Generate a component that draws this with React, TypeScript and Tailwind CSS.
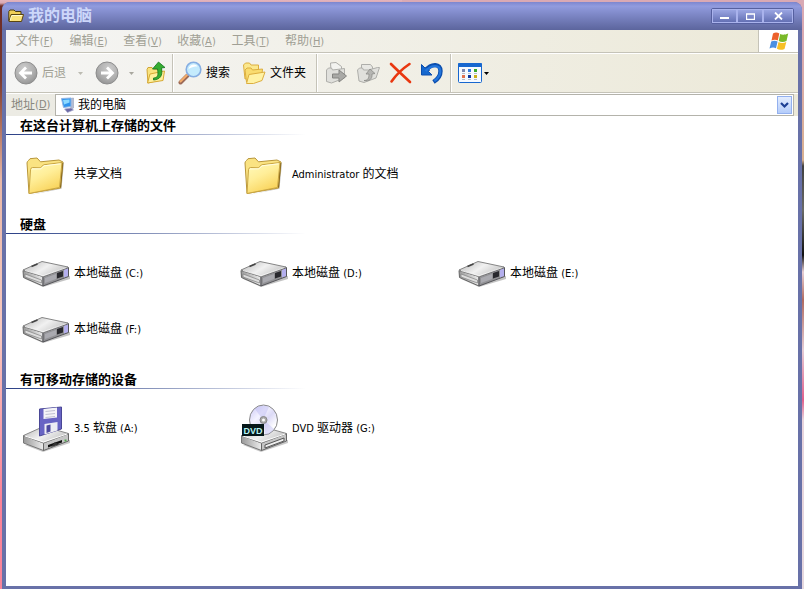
import React from "react";

const uiFont = "font-['Tahoma','DejaVu_Sans_Condensed','Noto_Sans_CJK_SC',sans-serif]";

function SmallFolder() {
  return (
    <svg width="16" height="16" viewBox="0 0 16 16" aria-hidden="true">
      <path d="M.8 13V3.500L2 2h4l1.500 1.500H13V6" fill="#f0cf58" stroke="#4b3c10" />
      <path d="m1 13.500 2-7h12.500l-2 7z" fill="#fbe37c" stroke="#5a4511" strokeLinejoin="round" />
      <path d="m3.800 7.500h10.500M3.500 8l-1.300 4.500" stroke="#fffbd2" />
    </svg>
  );
}

function RoundArrow({ flip = false }: { flip?: boolean }) {
  return (
    <svg width="24" height="24" viewBox="0 0 24 24" aria-hidden="true" className={flip ? "-scale-x-100" : ""}>
      <defs>
        <radialGradient id="disc" cx=".4" cy=".3" r=".75">
          <stop offset="0" stopColor="#cdcdcd" />
          <stop offset=".65" stopColor="#adadad" />
          <stop offset="1" stopColor="#929292" />
        </radialGradient>
      </defs>
      <circle cx="12" cy="12" r="11" fill="url(#disc)" stroke="#8d8d8d" />
      <path d="M18 12H7M12 6.500 6.500 12l5.500 5.500" fill="none" stroke="#fff" strokeWidth="2.800" />
    </svg>
  );
}

function UpFolder() {
  return (
    <svg width="24" height="24" viewBox="0 0 24 24" aria-hidden="true">
      <path d="M3 8.500 4 6.500h4l1.500 1.500 8 .5v10L4 22z" fill="#f9e37d" stroke="#d0a536" />
      <path d="M3.500 22 6 13l14.500-3L19 19.500z" fill="#fff09b" stroke="#d6a935" strokeLinejoin="round" />
      <path d="M9.500 17c4.500 0 5-3 4-9H8.500L14.500 1l6.500 5.500-3.500.500c1.500 8-1.500 11.500-8 12z" fill="#36ad31" stroke="#137520" strokeWidth=".8" />
    </svg>
  );
}

function Magnifier() {
  return (
    <svg width="24" height="24" viewBox="0 0 24 24" aria-hidden="true">
      <path d="m9.500 14.500-7 7" stroke="#9b6a58" strokeWidth="4" strokeLinecap="round" />
      <path d="m9 14-6.500 6.500" stroke="#f5ad6b" strokeWidth="2" strokeLinecap="round" />
      <circle cx="15.500" cy="8.500" r="7.300" fill="#c4ebfd" stroke="#86aee2" strokeWidth="1.600" />
      <path d="M10.500 8c.5-2.500 2.500-4.500 5.500-4.500 2 0 3 1 3.500 2-3 0-5.500.5-9 2.500z" fill="#fff" />
    </svg>
  );
}

function OpenFolders() {
  return (
    <svg width="24" height="24" viewBox="0 0 24 24" aria-hidden="true">
      <g stroke="#dcae3f" strokeLinejoin="round">
        <path d="m3 18-1.500-14 2-2h4l1.500 2h7.500v11z" fill="#fbe88e" />
        <path d="m4.500 21-1.500-12 2-2h4l1.500 2 10-1-1 10z" fill="#f9dc70" />
        <path d="m4.500 22.500 2.500-9 16-2.500-3 8.500-8.500 3z" fill="#fff2a4" />
      </g>
    </svg>
  );
}

function MoveIcon({ copy = false }: { copy?: boolean }) {
  return (
    <svg width="24" height="24" viewBox="0 0 24 24" aria-hidden="true">
      <g fill="#e8e8e4" stroke="#aeaeaa" strokeLinejoin="round">
        {copy ? (
          <>
            <path d="M5.500 3.500h9l2 2.500v11h-11z" />
            <path d="m3 20-1.500-11 2-2h3l1 2h5l9-2.500h2L20 17 8 21.500z" fill="#e0e0dc" />
            <path d="M8 19.500c4 0 5-2.500 5-6.500h-3l4-5 5 4.500-3 .5c.5 5-2.500 7.500-8 6.500z" fill="#b5b5b2" stroke="#8b8b88" strokeWidth=".8" />
          </>
        ) : (
          <>
            <path d="M6.500 2 12 1.500l5.500 4V14l-10 3z" fill="#f3f3f0" />
            <path d="M2.500 20.500V9l2-2h3l1 2 12-1.500V17l-13 5z" fill="#e0e0dc" />
            <path d="M8.500 13H15V9l7.500 6-7.500 6v-4H8.500z" fill="#a9a9a6" stroke="#858582" />
          </>
        )}
      </g>
    </svg>
  );
}

function DeleteIcon() {
  return (
    <svg width="24" height="24" viewBox="0 0 24 24" aria-hidden="true">
      <path d="M3 3C8 8 15 14.500 22 21M21.500 3C14 8 8 14 3.500 20.500" fill="none" stroke="#e93710" strokeWidth="2.600" strokeLinecap="round" />
    </svg>
  );
}

function UndoIcon() {
  return (
    <svg width="24" height="24" viewBox="0 0 24 24" aria-hidden="true">
      <path d="M5.500 9.500C12 1.500 20.500 3 20.500 10c0 5.500-3 8.500-7 11" fill="none" stroke="#0c4fae" strokeWidth="4.400" />
      <path d="M1.500 3.500V14H12l-3.500-3.500 1-1.500-2.500-2.500L5 7z" fill="#1668ce" stroke="#0c4fae" />
      <path d="M5.500 10C12 3 20 4 20.300 10c0 4.500-2.300 7.500-6 10" fill="none" stroke="#2375dc" strokeWidth="2.200" />
    </svg>
  );
}

function ViewsIcon() {
  return (
    <svg width="24" height="20" viewBox="0 0 24 20" aria-hidden="true">
      <rect x=".5" y=".5" width="23" height="19" rx="1" fill="#f6faff" stroke="#1767cf" />
      <path d="M0 1q0-1 1-1h22q1 0 1 1v3H0z" fill="#1767cf" />
      <path d="M4 6h3v3H4z" fill="#7e88ae" />
      <path d="M10 6h3v3h-3z" fill="#3279dd" />
      <path d="M16 6h3v3h-3z" fill="#38a92c" />
      <path d="M4 12h3v3H4z" fill="#e2734d" />
      <path d="M10 12h3v3h-3z" fill="#10399e" />
      <path d="M16 12h3v3h-3z" fill="#cbb01a" />
      <path d="M4 10.500h3m3 0h3m3 0h3M4 16.500h3m3 0h3m3 0h3" stroke="#b5bdc9" />
    </svg>
  );
}

function WindowsFlag() {
  return (
    <svg width="20" height="20" viewBox="0 0 20 20" aria-hidden="true">
      <path d="M4 2.500C6.500 1 8.500 1.500 10.300 2.500L8.800 9.500C7 8.500 5 8.300 2.500 9.500z" fill="#ec612c" />
      <path d="M11.200 3c2 1 4.500 1 8-.5L17.500 10c-3 1.500-5.500 1.200-7.800 0z" fill="#79b928" />
      <path d="M2.200 10.500c2.500-1.200 4.500-1 6.400 0L7 17.300c-2-1-4-1-6.500.2z" fill="#4b8fe0" />
      <path d="M9.500 11c2.500 1.200 5 1.200 7.800 0L15.500 18c-3 1.300-5.500 1-7.600-.2z" fill="#f7bf25" />
    </svg>
  );
}

function ComputerIcon() {
  return (
    <svg width="16" height="16" viewBox="0 0 16 16" aria-hidden="true">
      <path d="m10 1.500 3.500-.5v10L11 13z" fill="#b6bdd2" stroke="#8d96b3" strokeWidth=".5" />
      <path d="M1.500 1.500 11 1v8.500l-7.500 1z" fill="#2f94ed" stroke="#91b5e5" />
      <path d="m3 3 6.500-.5v3L4 7.500z" fill="#8dd9ff" />
      <path d="m4.500 12 6.500-1 2.500 2-6 2.500z" fill="#6d6aa5" stroke="#aaaed0" strokeWidth=".7" />
    </svg>
  );
}

function FolderIcon() {
  return (
    <svg width="48" height="48" viewBox="0 0 48 48" aria-hidden="true">
      <defs>
        <linearGradient id="folderFront" x1="0" y1="0" x2=".5" y2="1">
          <stop offset="0" stopColor="#fffbc0" />
          <stop offset=".5" stopColor="#ffee98" />
          <stop offset="1" stopColor="#f9d45c" />
        </linearGradient>
      </defs>
      <path d="M8 45 39.500 38.800 42 13l-1.500-1-1.500 26z" fill="#777" opacity=".45" />
      <path d="M5 13q0-1.500 1.500-2.500L8 8.700 15 8l3.500 3.800L37 10l4 2-2.500 26L7 43.500z" fill="#fae382" stroke="#b8963a" strokeLinejoin="round" />
      <path d="m40.500 13-2 24.500" fill="none" stroke="#84651b" strokeWidth="1.200" />
      <path d="M8.500 19.500q0-1.500 2-2l8 .3 3-3L40 12.500 37.500 37.500 7 43.500z" fill="url(#folderFront)" stroke="#c9a542" strokeLinejoin="round" />
      <path d="m10 19 9-.2 3-3L38.500 13.800" fill="none" stroke="#fffde2" />
    </svg>
  );
}

function DriveGradients() {
  return (
    <defs>
      <linearGradient id="driveTop" x1="0" y1="0" x2="1" y2=".5">
        <stop offset="0" stopColor="#b4b4b4" />
        <stop offset=".55" stopColor="#f1f1f1" />
        <stop offset="1" stopColor="#c6c6c6" />
      </linearGradient>
      <linearGradient id="driveSide" x1="0" y1="0" x2="1" y2="0">
        <stop offset="0" stopColor="#999" />
        <stop offset="1" stopColor="#ececec" />
      </linearGradient>
    </defs>
  );
}

function DiskIcon() {
  return (
    <svg width="48" height="48" viewBox="0 0 48 48" aria-hidden="true">
      <DriveGradients />
      <path d="m2 29.500 19 8.500L48 30v-3L24 34z" fill="#888" opacity=".5" />
      <path d="M1 21.500 21 27.500v9.500L1.500 28.500z" fill="url(#driveSide)" stroke="#666" strokeLinejoin="round" />
      <path d="M21 27.500 46.500 18.500v9l-25.500 9.500z" fill="#929295" stroke="#55555a" strokeLinejoin="round" />
      <path d="M1 21 20 12.500l26 5.500-25 9.500z" fill="url(#driveTop)" stroke="#858585" strokeLinejoin="round" />
      <path d="m9.500 17.500 6-2.500" stroke="#444" strokeWidth="1.600" />
      <path d="m3 25 16.500 6v3L3 28z" fill="#ddd" stroke="#808080" strokeWidth=".7" />
      <path d="m23 29 11-4v5l-11 4z" fill="#aaaab0" />
      <path d="m35 24 6-2v5.500l-6 2z" fill="#29292e" />
      <path d="m42 21 4-1.500v7.500l-4 1.500z" fill="#b4afee" />
      <path d="m3 21.500 18 5.300L44.500 18.500" fill="none" stroke="#fff" strokeWidth=".8" />
    </svg>
  );
}

function DriveBase() {
  return (
    <>
      <DriveGradients />
      <path d="m3 41 18 7 27-9v-3z" fill="#888" opacity=".45" />
      <path d="M1.500 31.500 21.500 39v7.500L1.500 39z" fill="url(#driveSide)" stroke="#777" strokeLinejoin="round" />
      <path d="m21.500 39 25-9.500V37l-25 9.500z" fill="#c5c5c5" stroke="#666" strokeLinejoin="round" />
      <path d="m1.500 31.500 20-9 25 7-25 9.500z" fill="url(#driveTop)" stroke="#888" strokeLinejoin="round" />
      <path d="m3 32 18.500 6L45 30" fill="none" stroke="#fff" />
    </>
  );
}

function FloppyIcon() {
  return (
    <svg width="48" height="48" viewBox="0 0 48 48" aria-hidden="true">
      <DriveBase />
      <path d="m26 41 14-5v2.500L26 43.500z" fill="#111" />
      <path d="m29 43 4-5 4 2.500z" fill="#333" />
      <path d="M42.500 36.500h2" stroke="#51a64f" strokeWidth="2" />
      <path d="M17.500 5 39.500 3v22l-22 7z" fill="#6864c4" stroke="#4a4796" strokeLinejoin="round" />
      <path d="m21.500 5 13.500-1.500v10L21.500 15z" fill="#f4f4f8" />
      <path d="m23.500 7.500 9.500-1m-9.500 4 9.500-1m-9.500 4 9.500-1" stroke="#bfc1d1" />
      <path d="m22.500 20 13-2v8.500l-13 4z" fill="#ededf4" />
      <path d="m24.500 21.500 4-1v7l-4 1.500z" fill="#4d499f" />
    </svg>
  );
}

function DvdIcon() {
  return (
    <svg width="48" height="48" viewBox="0 0 48 48" aria-hidden="true">
      <defs>
        <linearGradient id="disc-shine" x1="0" y1="0" x2="1" y2="1">
          <stop offset="0" stopColor="#c9c5f5" />
          <stop offset=".35" stopColor="#f3f2ff" />
          <stop offset=".55" stopColor="#dcdaf6" />
          <stop offset=".8" stopColor="#fff" />
          <stop offset="1" stopColor="#c2c0e6" />
        </linearGradient>
      </defs>
      <DriveBase />
      <path d="m25 41 19-7v3l-19 7z" fill="#eee" stroke="#555" />
      <ellipse cx="23.500" cy="16" rx="14" ry="15" fill="url(#disc-shine)" stroke="#888" />
      <path d="M23 16 15 5c4-4 10-4 14-2zM24 16l10 9c-3 4-6 6-9 5.500z" fill="#b7b3ef" opacity=".4" />
      <circle cx="23.500" cy="16" r="3.500" fill="#aaa" stroke="#888" />
      <circle cx="23.500" cy="16" r="1.500" fill="#fff" />
      <rect x="2" y="20" width="22" height="12" fill="#06171a" />
      <text x="3.500" y="29.500" fontSize="9" fontWeight="bold" fill="#b7f4f2" fontFamily="Liberation Sans, sans-serif">DVD</text>
    </svg>
  );
}

function Label({ text }: { text: string }) {
  return (
    <span className="whitespace-nowrap">
      {text.split(/([\x20-\x7e]+)/).map((part, i) =>
        /^[\x20-\x7e]/.test(part) ? (
          <span key={i} className="text-[11px]">{part}</span>
        ) : (
          part
        ),
      )}
    </span>
  );
}

type Entry = { label: string; icon: React.ReactNode };

function Section({ title, items }: { title: string; items: Entry[] }) {
  return (
    <section className="pb-[13px]">
      <h2 className="h-[18px] pl-3.5 text-[13px] leading-5 font-bold">{title}</h2>
      <div className="h-px w-[300px] bg-linear-to-r from-[#2b3f86] via-[#8b97bd] to-white" />
      <div className="flex flex-wrap pt-[11px] pl-4">
        {items.map((item) => (
          <button key={item.label} type="button" className="flex h-14 w-[218px] items-center gap-1 text-left">
            {item.icon}
            <Label text={item.label} />
          </button>
        ))}
      </div>
    </section>
  );
}

function Caret({ className }: { className: string }) {
  return (
    <svg width="5" height="3" viewBox="0 0 5 3" aria-hidden="true" className={className}>
      <path d="M0 0h5L2.500 3z" fill="currentColor" />
    </svg>
  );
}

function Divider() {
  return <div className="w-0.5 self-stretch border-r border-l border-r-white border-l-[#c5c3b8]" />;
}

const menus = [
  ["文件", "F"],
  ["编辑", "E"],
  ["查看", "V"],
  ["收藏", "A"],
  ["工具", "T"],
  ["帮助", "H"],
];

const captionButton =
  "flex h-[14px] items-center justify-center border border-[#a9b2ec] bg-linear-to-b from-[#9aa5e2] to-[#6470b4]";

export default function App() {
  return (
    <div
      className={`flex min-h-screen flex-col bg-[linear-gradient(to_bottom,#e3b3bd_0px,#d9a9b4_3px,#6b2b25_6px,#7b3a30_80px,#b0705c_125px,#e8b8a8_180px,#f7c9c0_330px,#fa8298_500px,#f9859a_100%),linear-gradient(to_bottom,#d9a9b4_0px,#d9a9b0_50px,#d8b090_160px,#404040_166px,#6b6b68_210px,#101010_255px,#e8cfd4_272px,#b06a60_300px,#e5ccd4_350px,#e0608c_400px,#e8d4dc_420px,#e6d8de_100%)] bg-[size:50%_100%,100%_100%] bg-no-repeat px-0.5 pt-0.5 text-xs text-black ${uiFont}`}
    >
      <div className="flex flex-1 flex-col rounded-t-lg bg-[#6871a8] px-1 pb-[3px]">
        <header className="-mx-1 flex h-7 items-center rounded-t-lg bg-linear-to-b from-[#7c86cf] via-[#919bde] via-15% to-[#5c659d] pr-2 pl-1.5">
          <SmallFolder />
          <h1 className="ml-1 flex-1 text-base leading-6 font-bold text-[#cdd7fa]">我的电脑</h1>
          <div className="flex rounded-xs border border-[#5660a0]">
            <button type="button" aria-label="最小化" className={`${captionButton} w-[25px]`}>
              <svg width="10" height="8" viewBox="0 0 10 8" aria-hidden="true"><path d="M0 6h9" stroke="#fff" strokeWidth="2" /></svg>
            </button>
            <button type="button" aria-label="最大化" className={`${captionButton} w-[26px]`}>
              <svg width="9" height="7" viewBox="0 0 9 7" aria-hidden="true"><path d="M.5 1h8v5.500h-8zM0 1h9" fill="none" stroke="#fff" strokeWidth="1.300" /></svg>
            </button>
            <button type="button" aria-label="关闭" className={`${captionButton} w-[30px]`}>
              <svg width="9" height="8" viewBox="0 0 9 8" aria-hidden="true"><path d="m1 .5 7 7m0-7-7 7" stroke="#fff" strokeWidth="1.800" /></svg>
            </button>
          </div>
        </header>

        <div className="bg-linear-to-r from-[#f5f5f4] to-[#ece9d8]">
          <div className="flex h-[23px] border-b border-[#c5c3b8]">
            <nav className="flex flex-1 items-center gap-[15px] pl-[9px] text-[#a09f94]">
              {menus.map(([name, key]) => (
                <button key={key} type="button" className="w-[39px] whitespace-nowrap">
                  {name}
                  <span className="text-[11px]">(<u>{key}</u>)</span>
                </button>
              ))}
            </nav>
            <div className="flex w-10 items-center justify-center border-l border-[#c5c3b8] bg-white">
              <WindowsFlag />
            </div>
          </div>

          <div className="flex h-10 items-center border-t border-b border-t-white border-b-[#c5c3b8] pl-2">
            <button type="button" className="flex items-center gap-1 text-[#a09f94]">
              <RoundArrow />
              后退
              <Caret className="mx-2 text-[#bcbbb2]" />
            </button>
            <button type="button" aria-label="前进" className="ml-1 flex items-center gap-1">
              <RoundArrow flip />
              <Caret className="mx-1.5 text-[#a8a79e]" />
            </button>
            <button type="button" aria-label="向上" className="mx-1">
              <UpFolder />
            </button>
            <Divider />
            <button type="button" className="ml-1 flex items-center gap-1">
              <Magnifier />
              搜索
            </button>
            <button type="button" className="mr-2.5 ml-3 flex items-center gap-1">
              <OpenFolders />
              文件夹
            </button>
            <Divider />
            <div className="flex gap-2 px-1.5">
              <button type="button" aria-label="移动到"><MoveIcon /></button>
              <button type="button" aria-label="复制到"><MoveIcon copy /></button>
              <button type="button" aria-label="删除"><DeleteIcon /></button>
              <button type="button" aria-label="撤消"><UndoIcon /></button>
            </div>
            <Divider />
            <button type="button" aria-label="查看方式" className="ml-1.5 flex items-center gap-0.5">
              <ViewsIcon />
              <Caret className="text-black" />
            </button>
          </div>

          <div className="flex h-[23px] items-stretch border-t border-t-white bg-linear-to-r from-[#ecebe4] to-[#ece9d8] pr-1">
            <label htmlFor="address" className="flex w-[49px] items-center pl-[5px] whitespace-nowrap text-[#88877e]">
              地址<span className="text-[11px]">(<u>D</u>)</span>
            </label>
            <div className="relative flex flex-1 items-center border border-[#b4b3ab] bg-white pl-1">
              <ComputerIcon />
              <select id="address" className="h-full flex-1 appearance-none bg-white pl-0.5 outline-none">
                <option>我的电脑</option>
              </select>
              <span className="pointer-events-none absolute top-px right-px flex h-[18px] w-[15px] items-center justify-center border border-[#93b0ee] bg-linear-to-b from-[#e4edfe] to-[#b4ccfa]">
                <svg width="9" height="7" viewBox="0 0 9 7" aria-hidden="true"><path d="m1 1 3.500 3.500L8 1" fill="none" stroke="#1d3f94" strokeWidth="2.200" /></svg>
              </span>
            </div>
          </div>
        </div>

        <main className="flex-1 bg-white">
          <Section
            title="在这台计算机上存储的文件"
            items={[
              { label: "共享文档", icon: <FolderIcon /> },
              { label: "Administrator 的文档", icon: <FolderIcon /> },
            ]}
          />
          <Section
            title="硬盘"
            items={[
              { label: "本地磁盘 (C:)", icon: <DiskIcon /> },
              { label: "本地磁盘 (D:)", icon: <DiskIcon /> },
              { label: "本地磁盘 (E:)", icon: <DiskIcon /> },
              { label: "本地磁盘 (F:)", icon: <DiskIcon /> },
            ]}
          />
          <Section
            title="有可移动存储的设备"
            items={[
              { label: "3.5 软盘 (A:)", icon: <FloppyIcon /> },
              { label: "DVD 驱动器 (G:)", icon: <DvdIcon /> },
            ]}
          />
        </main>
      </div>
    </div>
  );
}
